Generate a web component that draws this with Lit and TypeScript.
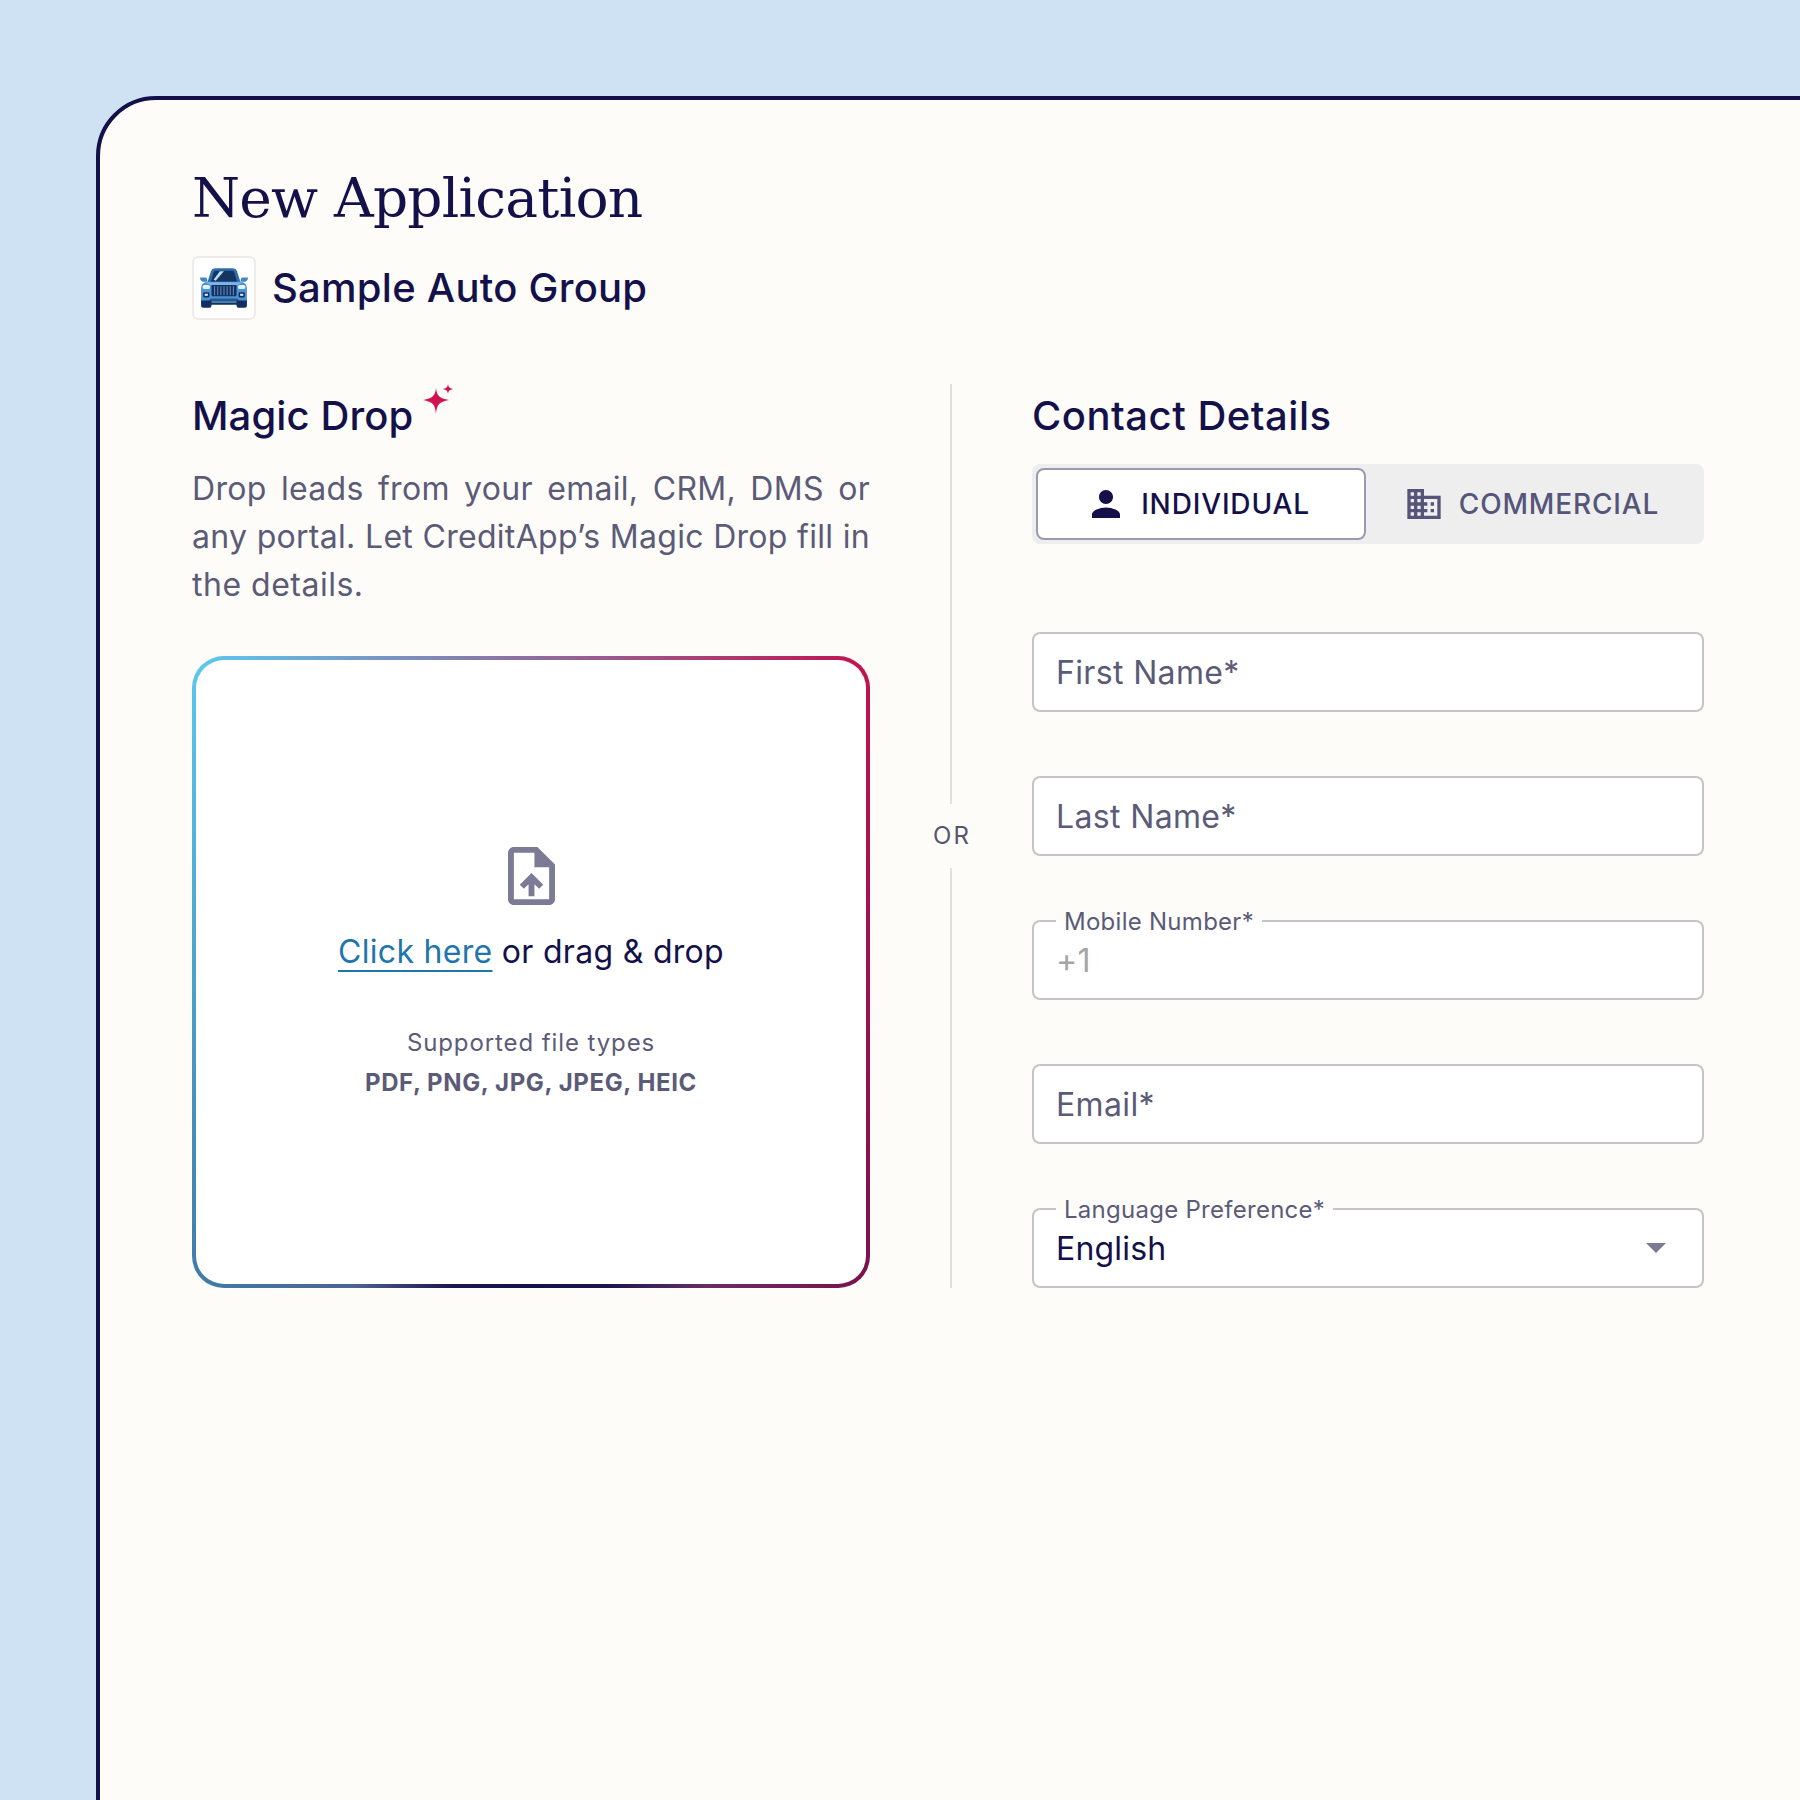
import { LitElement, html, css } from "lit";
import { customElement } from "lit/decorators.js";

@customElement("app-root")
export class AppRoot extends LitElement {
  static styles = css`
    :host {
      display: block;
      width: 1800px;
      height: 1800px;
      overflow: hidden;
      background: #cfe2f3;
      font-family: Inter, "Liberation Sans", sans-serif;
      color: #14114a;
      box-sizing: border-box;
      padding: 96px 0 0 96px;
    }
    * { box-sizing: border-box; }
    .card {
      width: 1800px;
      height: 1800px;
      background: #fdfcf8;
      border: 4px solid #14114a;
      border-radius: 60px;
      padding: 60px 92px;
    }
    h1 {
      margin: 0;
      padding-top: 2px;
      font-family: "DejaVu Serif", "Liberation Serif", serif;
      font-weight: 400;
      font-size: 55px;
      line-height: 72px;
      letter-spacing: -0.8px;
    }
    .org { display: flex; align-items: center; gap: 16px; margin-top: 22px; }
    .logo {
      width: 64px; height: 64px;
      background: #fff;
      border: 2px solid #eeebe8;
      border-radius: 6px;
      display: flex; align-items: center; justify-content: center;
    }
    .org-name { font-size: 40px; line-height: 48px; font-weight: 500; letter-spacing: 0.25px; }
    .cols { display: flex; margin-top: 64px; width: 1512px; }
    .left { width: 678px; flex: none; }
    .divider {
      width: 162px; flex: none;
      display: flex; flex-direction: column; align-items: center;
    }
    .line { flex: 1; width: 2px; background: #e0e0de; }
    .or { font-size: 24px; line-height: 32px; letter-spacing: 2px; color: #55556f; padding: 16px 0 16px 2px; }
    .right { width: 672px; flex: none; }
    h2 {
      margin: 0;
      font-size: 40px; line-height: 64px; font-weight: 500;
      display: flex; align-items: flex-start;
      letter-spacing: 0.1px;
    }
    .h-contact { letter-spacing: 0.5px; }
    .spark { margin-left: 10px; }
    .desc {
      margin: 17px 0 0;
      font-size: 32px; line-height: 48px;
      color: #5b5b78;
      letter-spacing: 0.3px;
      text-align: justify;
    }
    .tail { letter-spacing: 0.5px; }
    .drop {
      margin-top: 47px;
      height: 632px;
      padding-top: 4px;
      border: 4px solid transparent;
      border-radius: 32px;
      background:
        linear-gradient(#fff, #fff) padding-box,
        radial-gradient(ellipse 26% 6% at 50% 100%, #14114a 0%, rgba(20,17,74,.9) 45%, rgba(20,17,74,0) 100%) border-box,
        linear-gradient(180deg, rgba(20,17,74,0) 0%, rgba(20,17,74,.42) 100%) border-box,
        linear-gradient(90deg, #5cc9f0 0%, #c2124e 100%) border-box;
      display: flex; flex-direction: column; align-items: center; justify-content: center;
    }
    .drop-line { font-size: 32px; line-height: 48px; margin-top: 23px; letter-spacing: 0.3px; }
    .drop-line a {
      color: #1f76ab;
      text-decoration: underline;
      text-decoration-thickness: 2px;
      text-underline-offset: 7px;
    }
    .types { font-size: 24px; line-height: 36px; margin-top: 49px; color: #5b5b78; letter-spacing: 0.9px; }
    .types-b { font-size: 24px; line-height: 36px; margin-top: 4px; font-weight: 700; color: #5b5b78; letter-spacing: 0.62px; }
    .tabs {
      margin-top: 16px;
      height: 80px;
      background: #eeeeee;
      border-radius: 8px;
      padding: 4px;
      display: flex;
    }
    .tab {
      flex: 1;
      display: flex; align-items: center; justify-content: center; gap: 18px;
      font-size: 28px; font-weight: 450; letter-spacing: 0.85px;
      color: #55557a;
      border: 2px solid transparent;
      border-radius: 8px;
    }
    .tab.on { background: #fff; border-color: #9a9ab0; color: #14114a; width: 330px; flex: none; gap: 21px; }
    .fields { margin-top: 88px; display: flex; flex-direction: column; gap: 64px; }
    .field {
      position: relative;
      height: 80px;
      background: #fff;
      border: 2px solid #c4c4c4;
      border-radius: 8px;
      padding: 0 22px;
      display: flex; align-items: center;
      font-size: 32px;
      color: #5b5b78;
      letter-spacing: 0.35px;
    }
    .field .float {
      position: absolute;
      left: 22px; top: -14px;
      padding: 0 8px;
      font-size: 24px; line-height: 28px;
      color: #5b5b78;
      letter-spacing: 0.27px;
      background: linear-gradient(#fdfcf8 46%, #fff 46%);
    }
    .ph { color: #a5a5a5; }
    .val { color: #14114a; flex: 1; letter-spacing: 0.2px; }
    .caret { width: 0; height: 0; border-left: 10px solid transparent; border-right: 10px solid transparent; border-top: 10px solid #7a7a94; margin-right: 14px; }
    .icon { display: block; flex: none; }
  `;

  render() {
    return html`
      <div class="card">
        <h1>New Application</h1>
        <div class="org">
          <div class="logo">
            <svg class="icon" width="50" height="42" viewBox="0 0 48 40">
              <path d="M8 15 11.500 4Q12.500 1 16 1H32Q35.500 1 36.500 4L40 15Z" fill="#2f6eab"/>
              <path d="M11.500 14 14 5Q14.500 3.500 16.500 3.500H31.500Q33.500 3.500 34 5L36.500 14Z" fill="#123562"/>
              <path d="M14 12 20 4H24L16 13Z" fill="#b9dcf3"/>
              <path d="M1 10H6Q8 10 8 14H4Q1 13.500 1 10Z M47 10H42Q40 10 40 14H44Q47 13.500 47 10Z" fill="#3f86c6"/>
              <path d="M2 34V20Q2 15 8 14H40Q46 15 46 20V34Z" fill="#4b92d6"/>
              <path d="M6 14.500H42L37 17H11Z" fill="#7db6e8"/>
              <rect x="12" y="17" width="24" height="11" rx="1" fill="#14305e"/>
              <path d="M15 18v9M18 18v9M21 18v9M24 18v9M27 18v9M30 18v9M33 18v9" stroke="#5f8dbf" stroke-width="1"/>
              <rect x="3.500" y="17" width="7" height="4" rx="1.500" fill="#e6f4fc"/>
              <rect x="37.500" y="17" width="7" height="4" rx="1.500" fill="#e6f4fc"/>
              <rect x="4" y="24" width="6" height="5" rx="1" fill="#12305c"/>
              <rect x="38" y="24" width="6" height="5" rx="1" fill="#12305c"/>
              <rect x="5.500" y="25.500" width="3" height="2" fill="#dff1fb"/>
              <rect x="39.500" y="25.500" width="3" height="2" fill="#dff1fb"/>
              <path d="M11 30H37L39 33H9Z" fill="#245a92"/>
              <path d="M2 32H12V37Q12 39 10 39H4Q2 39 2 37Z M36 32H46V37Q46 39 44 39H38Q36 39 36 37Z M12 34H36V36H12Z" fill="#12305c"/>
            </svg>
          </div>
          <div class="org-name">Sample Auto Group</div>
        </div>
        <div class="cols">
          <div class="left">
            <h2>Magic Drop
              <svg class="spark icon" width="32" height="32" viewBox="0 0 32 32" fill="#d1124f">
                <path d="M13 4C14 12 16 14 26 16 16 18 14 20 13 30 12 20 10 18 0 16 10 14 12 12 13 4Z"/>
                <path d="M25 0C25.500 3 26 4 30 5 26 6 25.500 7 25 10 24.500 7 24 6 20 5 24 4 24.500 3 25 0Z"/>
              </svg>
            </h2>
            <p class="desc">Drop leads from your email, CRM, DMS or any portal. Let CreditApp’s Magic Drop fill in <span class="tail">the details.</span></p>
            <div class="drop">
              <svg class="icon" width="47" height="58" viewBox="4 2 16 20" preserveAspectRatio="none" fill="#7b7b96">
                <path d="M14 2H6c-1.100 0-1.990.9-1.990 2L4 20c0 1.100.89 2 1.990 2H18c1.100 0 2-.9 2-2V8l-6-6zm4 18H6V4h7v5h5v11zM8 15.010l1.410 1.410L11 14.840V19h2v-4.160l1.590 1.590L16 15.010 12.010 11 8 15.010z"/>
              </svg>
              <div class="drop-line"><a>Click here</a> or drag &amp; drop</div>
              <div class="types">Supported file types</div>
              <div class="types-b">PDF, PNG, JPG, JPEG, HEIC</div>
            </div>
          </div>
          <div class="divider">
            <div class="line"></div>
            <div class="or">OR</div>
            <div class="line"></div>
          </div>
          <div class="right">
            <h2 class="h-contact">Contact Details</h2>
            <div class="tabs">
              <div class="tab on">
                <svg class="icon" width="28" height="28" viewBox="4 4 16 16" fill="#14114a">
                  <path d="M12 12c2.210 0 4-1.790 4-4s-1.790-4-4-4-4 1.790-4 4 1.790 4 4 4zm0 2c-2.670 0-8 1.340-8 4v2h16v-2c0-2.660-5.330-4-8-4z"/>
                </svg>
                INDIVIDUAL
              </div>
              <div class="tab">
                <svg class="icon" width="34" height="30" viewBox="2 3 20 18" fill="#55557a">
                  <path d="M12 7V3H2v18h20V7H12zM6 19H4v-2h2v2zm0-4H4v-2h2v2zm0-4H4V9h2v2zm0-4H4V5h2v2zm4 12H8v-2h2v2zm0-4H8v-2h2v2zm0-4H8V9h2v2zm0-4H8V5h2v2zm10 12h-8v-2h2v-2h-2v-2h2v-2h-2V9h8v10zm-2-8h-2v2h2v-2zm0 4h-2v2h2v-2z"/>
                </svg>
                COMMERCIAL
              </div>
            </div>
            <div class="fields">
              <div class="field">First Name*</div>
              <div class="field">Last Name*</div>
              <div class="field"><span class="float">Mobile Number*</span><span class="ph">+1</span></div>
              <div class="field">Email*</div>
              <div class="field"><span class="float">Language Preference*</span><span class="val">English</span><span class="caret"></span></div>
            </div>
          </div>
        </div>
      </div>
    `;
  }
}
